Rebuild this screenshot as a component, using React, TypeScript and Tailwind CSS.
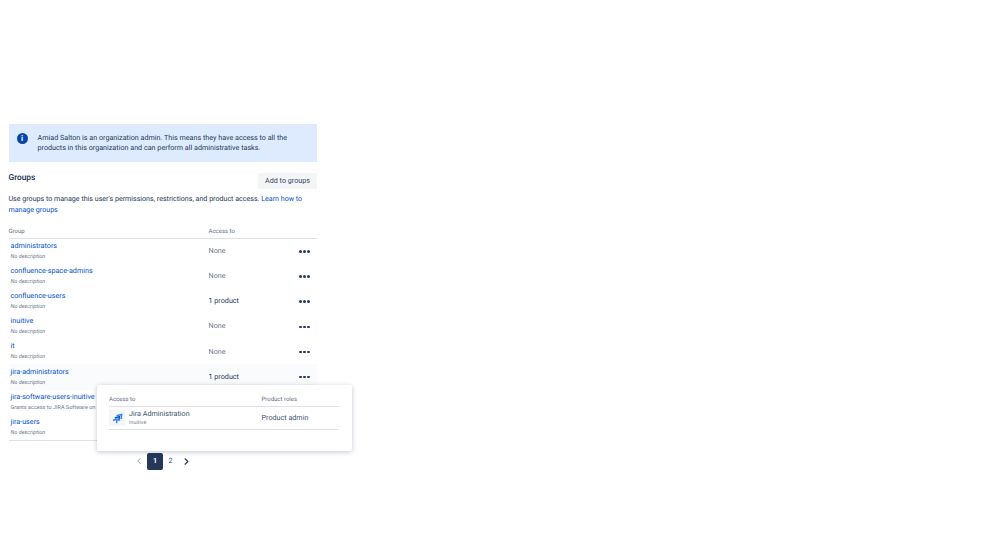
import { ChevronLeft, ChevronRight } from "lucide-react";

const groups = [
  { name: "administrators", desc: "No description", access: "None" },
  { name: "confluence-space-admins", desc: "No description", access: "None" },
  { name: "confluence-users", desc: "No description", access: "1 product" },
  { name: "inuitive", desc: "No description", access: "None" },
  { name: "it", desc: "No description", access: "None" },
  { name: "jira-administrators", desc: "No description", access: "1 product", active: true },
  { name: "jira-software-users-inuitive", desc: "Grants access to JIRA Software on", access: "", plain: true },
  { name: "jira-users", desc: "No description", access: "", plain: true },
];

const Dots = () => (
  <div className="flex gap-[1.5px]">
    <span className="w-[2.5px] h-[2.5px] rounded-full bg-[#253858]" />
    <span className="w-[2.5px] h-[2.5px] rounded-full bg-[#253858]" />
    <span className="w-[2.5px] h-[2.5px] rounded-full bg-[#253858]" />
  </div>
);

const JiraAdminIcon = () => (
  <div className="w-[16px] h-[16px] bg-[#f4f5f7] flex items-center justify-center shrink-0">
    <svg width="11" height="11" viewBox="0 0 12 12" fill="none" strokeWidth="1.6">
      <polyline points="5,3 10.500,1.500 10,6.500" stroke="#2684ff" />
      <polyline points="3,5.500 8,4 7.500,8.500" stroke="#0052cc" />
      <polyline points="1,8 5.500,6.800 5,11" stroke="#2684ff" />
    </svg>
  </div>
);

export default function App() {
  return (
    <div className="relative min-h-[556px] bg-white pt-[124px] pl-[8.5px] font-['Roboto','Open_Sans',sans-serif] text-[#172b4d] antialiased [text-rendering:geometricPrecision]">
      <div className="w-[308.5px]">
        <div className="flex h-[38px] items-center gap-[10px] bg-[#deebff] pl-[8px] pr-[25px]">
          <span className="flex w-[11px] h-[11px] shrink-0 items-center justify-center rounded-full bg-[#0747a6] text-[8px] leading-none font-bold text-white -mt-[9px]">
            i
          </span>
          <p className="text-[7.2px] leading-[10.5px] text-[#253858]">
            Amiad Salton is an organization admin. This means they have access to all the products in this organization and can perform all administrative tasks.
          </p>
        </div>

        <div className="mt-[11px] flex items-start justify-between">
          <h2 className="-mt-[1px] text-[8.3px] leading-[12px] font-medium text-[#172b4d]">Groups</h2>
          <button className="h-[16px] w-[59px] rounded-[2px] bg-[#f4f5f7] text-[7.2px] text-[#344563]">Add to groups</button>
        </div>

        <p className="mt-[5px] pr-[10px] text-[7.1px] leading-[10.5px] text-[#253858]">
          Use groups to manage this user's permissions, restrictions, and product access.{" "}
          <a className="text-[#0052cc]">Learn how to manage groups</a>
        </p>

        <div className="mt-[12px] flex h-[12px] items-start border-b border-[#dfe1e6] text-[6px] leading-[10px] text-[#5e6c84]">
          <div className="w-[200px]">Group</div>
          <div>Access to</div>
        </div>

        <div className="border-b border-[#dfe1e6]">
          {groups.map((g) => (
            <div key={g.name} className={`flex h-[25.1px] items-center ${g.active ? "bg-[#fafbfc]" : ""}`}>
              <div className="w-[200px] pl-[2px] shrink-0">
                <div className="text-[7.2px] leading-[12px] text-[#0052cc] whitespace-nowrap">{g.name}</div>
                <div className={`text-[5.5px] leading-[11px] text-[#6b778c] whitespace-nowrap ${g.plain && g.desc !== "No description" ? "" : "italic"}`}>{g.desc}</div>
              </div>
              {!g.plain && (
                <>
                  <div className={`flex-1 text-[7.2px] ${g.access === "None" ? "text-[#6b778c]" : "text-[#253858]"}`}>{g.access}</div>
                  <div className="pr-[7.5px]"><Dots /></div>
                </>
              )}
            </div>
          ))}
        </div>

        <div className="mt-[12px] flex items-center justify-center text-[7.2px]">
          <span className="flex w-[15.6px] h-[17px] items-center justify-center text-[#a5adba]"><ChevronLeft size={10} strokeWidth={2.5} /></span>
          <span className="flex w-[15.6px] h-[17px] items-center justify-center rounded-[2px] bg-[#253858] font-bold text-white">1</span>
          <span className="flex w-[15.6px] h-[17px] items-center justify-center text-[#42526e]">2</span>
          <span className="flex w-[15.6px] h-[17px] items-center justify-center text-[#253858]"><ChevronRight size={11} strokeWidth={2.5} /></span>
        </div>
      </div>

      {/* popup sits on top of the table */}
      <div className="absolute left-[96.5px] top-[385px] h-[66px] w-[255px] rounded-[2px] bg-white px-[12.5px] pt-[10px] shadow-[0_1px_5px_rgba(9,30,66,0.25)]">
        <div className="flex h-[12px] items-start border-b border-[#dfe1e6] text-[6px] leading-[9px] text-[#5e6c84]">
          <div className="w-[152.5px]">Access to</div>
          <div>Product roles</div>
        </div>
        <div className="flex h-[23px] items-center border-b border-[#dfe1e6]">
          <div className="flex w-[152.5px] items-center gap-[4px]">
            <JiraAdminIcon />
            <div>
              <div className="text-[7.2px] leading-[10px] text-[#42526e]">Jira Administration</div>
              <div className="text-[5.4px] leading-[8px] text-[#7a869a]">Inuitive</div>
            </div>
          </div>
          <div className="text-[7.2px] text-[#42526e]">Product admin</div>
        </div>
      </div>
    </div>
  );
}
